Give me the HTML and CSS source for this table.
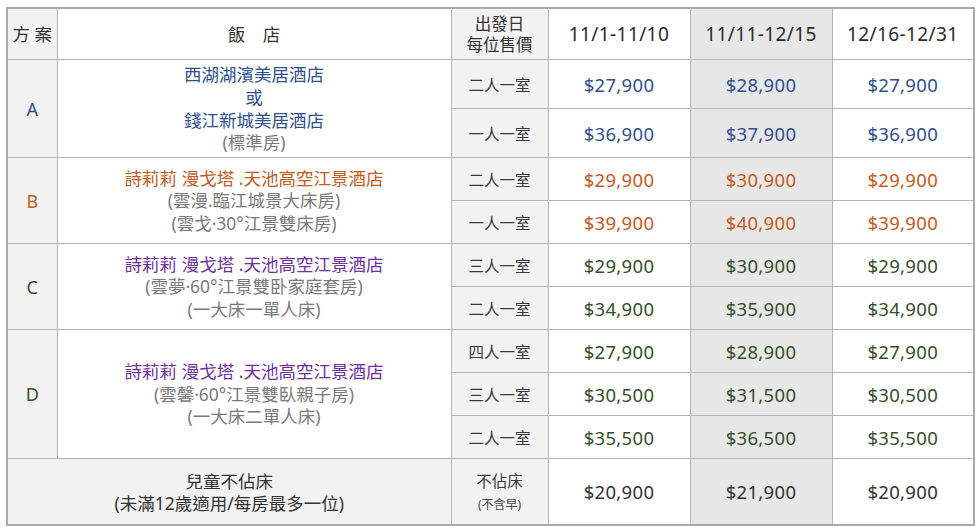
FILE: index.html
```html
<!DOCTYPE html>
<html lang="zh-Hant">
<head>
<meta charset="utf-8">
<link rel="stylesheet" href="styles.css">
</head>
<body>
<table class="price">
  <colgroup>
    <col class="c-plan"><col class="c-hotel"><col class="c-room"><col class="c-date"><col class="c-date"><col class="c-date">
  </colgroup>
  <thead>
    <tr class="r-head">
      <th class="gray plan-h">方 案</th>
      <th class="hotel-h">飯　店</th>
      <th class="gray small">出發日<br>每位售價</th>
      <th class="date">11/1-11/10</th>
      <th class="date mid">11/11-12/15</th>
      <th class="date">12/16-12/31</th>
    </tr>
  </thead>
  <tbody>
    <tr class="r-a">
      <td rowspan="2" class="gray plan blue">A</td>
      <td rowspan="2" class="hotel"><span class="blue">西湖湖濱美居酒店<br>或<br>錢江新城美居酒店</span><br><span class="sub">(標準房)</span></td>
      <td class="gray room">二人一室</td>
      <td class="p blue">$27,900</td><td class="p blue mid">$28,900</td><td class="p blue">$27,900</td>
    </tr>
    <tr class="r-a">
      <td class="gray room">一人一室</td>
      <td class="p blue">$36,900</td><td class="p blue mid">$37,900</td><td class="p blue">$36,900</td>
    </tr>
    <tr class="r-n">
      <td rowspan="2" class="gray plan orange">B</td>
      <td rowspan="2" class="hotel"><span class="orange">詩莉莉 漫戈塔 .天池高空江景酒店</span><br><span class="sub">(雲漫.臨江城景大床房)<br>(雲戈·30°江景雙床房)</span></td>
      <td class="gray room">二人一室</td>
      <td class="p orange">$29,900</td><td class="p orange mid">$30,900</td><td class="p orange">$29,900</td>
    </tr>
    <tr class="r-n">
      <td class="gray room">一人一室</td>
      <td class="p orange">$39,900</td><td class="p orange mid">$40,900</td><td class="p orange">$39,900</td>
    </tr>
    <tr class="r-n">
      <td rowspan="2" class="gray plan green">C</td>
      <td rowspan="2" class="hotel"><span class="purple">詩莉莉 漫戈塔 .天池高空江景酒店</span><br><span class="sub">(雲夢·60°江景雙卧家庭套房)<br>(一大床一單人床)</span></td>
      <td class="gray room">三人一室</td>
      <td class="p green">$29,900</td><td class="p green mid">$30,900</td><td class="p green">$29,900</td>
    </tr>
    <tr class="r-n">
      <td class="gray room">二人一室</td>
      <td class="p green">$34,900</td><td class="p green mid">$35,900</td><td class="p green">$34,900</td>
    </tr>
    <tr class="r-n">
      <td rowspan="3" class="gray plan green">D</td>
      <td rowspan="3" class="hotel"><span class="purple">詩莉莉 漫戈塔 .天池高空江景酒店</span><br><span class="sub">(雲馨·60°江景雙臥親子房)<br>(一大床二單人床)</span></td>
      <td class="gray room">四人一室</td>
      <td class="p green">$27,900</td><td class="p green mid">$28,900</td><td class="p green">$27,900</td>
    </tr>
    <tr class="r-n">
      <td class="gray room">三人一室</td>
      <td class="p green">$30,500</td><td class="p green mid">$31,500</td><td class="p green">$30,500</td>
    </tr>
    <tr class="r-n">
      <td class="gray room">二人一室</td>
      <td class="p green">$35,500</td><td class="p green mid">$36,500</td><td class="p green">$35,500</td>
    </tr>
    <tr class="r-kid">
      <td colspan="2" class="gray kid">兒童不佔床<br>(未滿12歲適用/每房最多一位)</td>
      <td class="gray room"><span class="nobed">不佔床</span><br><span class="tiny">(不含早)</span></td>
      <td class="p dark">$20,900</td><td class="p dark mid">$21,900</td><td class="p dark">$20,900</td>
    </tr>
  </tbody>
</table>
</body>
</html>
```

FILE: styles.css
```css
html, body {
  margin: 0;
  padding: 0;
  background: #ffffff;
}
body {
  padding: 7px 0 0 6px;
  font-family: "Noto Sans", "Noto Sans CJK TC", sans-serif;
  color: #333333;
}
.price {
  border-collapse: collapse;
  table-layout: fixed;
  width: 969px;
  border: 2px solid #a9a9a9;
}
.c-plan { width: 50px; }
.c-hotel { width: 394px; }
.c-room { width: 97px; }
.c-date { width: 142px; }
.price th,
.price td {
  border: 1px solid #b4b4b4;
  padding: 0;
  text-align: center;
  vertical-align: middle;
  font-weight: normal;
  background: #ffffff;
}
.r-head th { height: 50px; font-size: 17.5px; line-height: 21px; }
.r-a td { height: 48px; }
.r-n td { height: 42px; }
.r-kid td { height: 65px; }
.price .gray { background: #f2f2f2; }
.price .mid { background: #e8e7e8; }
.price .small { font-size: 16.5px; }
.price .date { font-size: 19px; color: #2b2b2b; letter-spacing: 0.4px; }
.plan { font-size: 18px; }
.hotel { font-size: 17.5px; line-height: 22.6px; }
.room { font-size: 15.5px; color: #3a3a3a; }
.p { font-size: 18.5px; letter-spacing: 0.3px; }
.kid { font-size: 17.5px; line-height: 22px; color: #333; }
.nobed { font-size: 15.5px; line-height: 20px; }
.tiny { font-size: 12px; line-height: 16px; color: #444; }
.sub { color: #7a7a7a; }
.blue { color: #2f4f90; }
.orange { color: #c55a1c; }
.purple { color: #7030a0; }
.green { color: #33502a; }
.dark { color: #333333; }
```
